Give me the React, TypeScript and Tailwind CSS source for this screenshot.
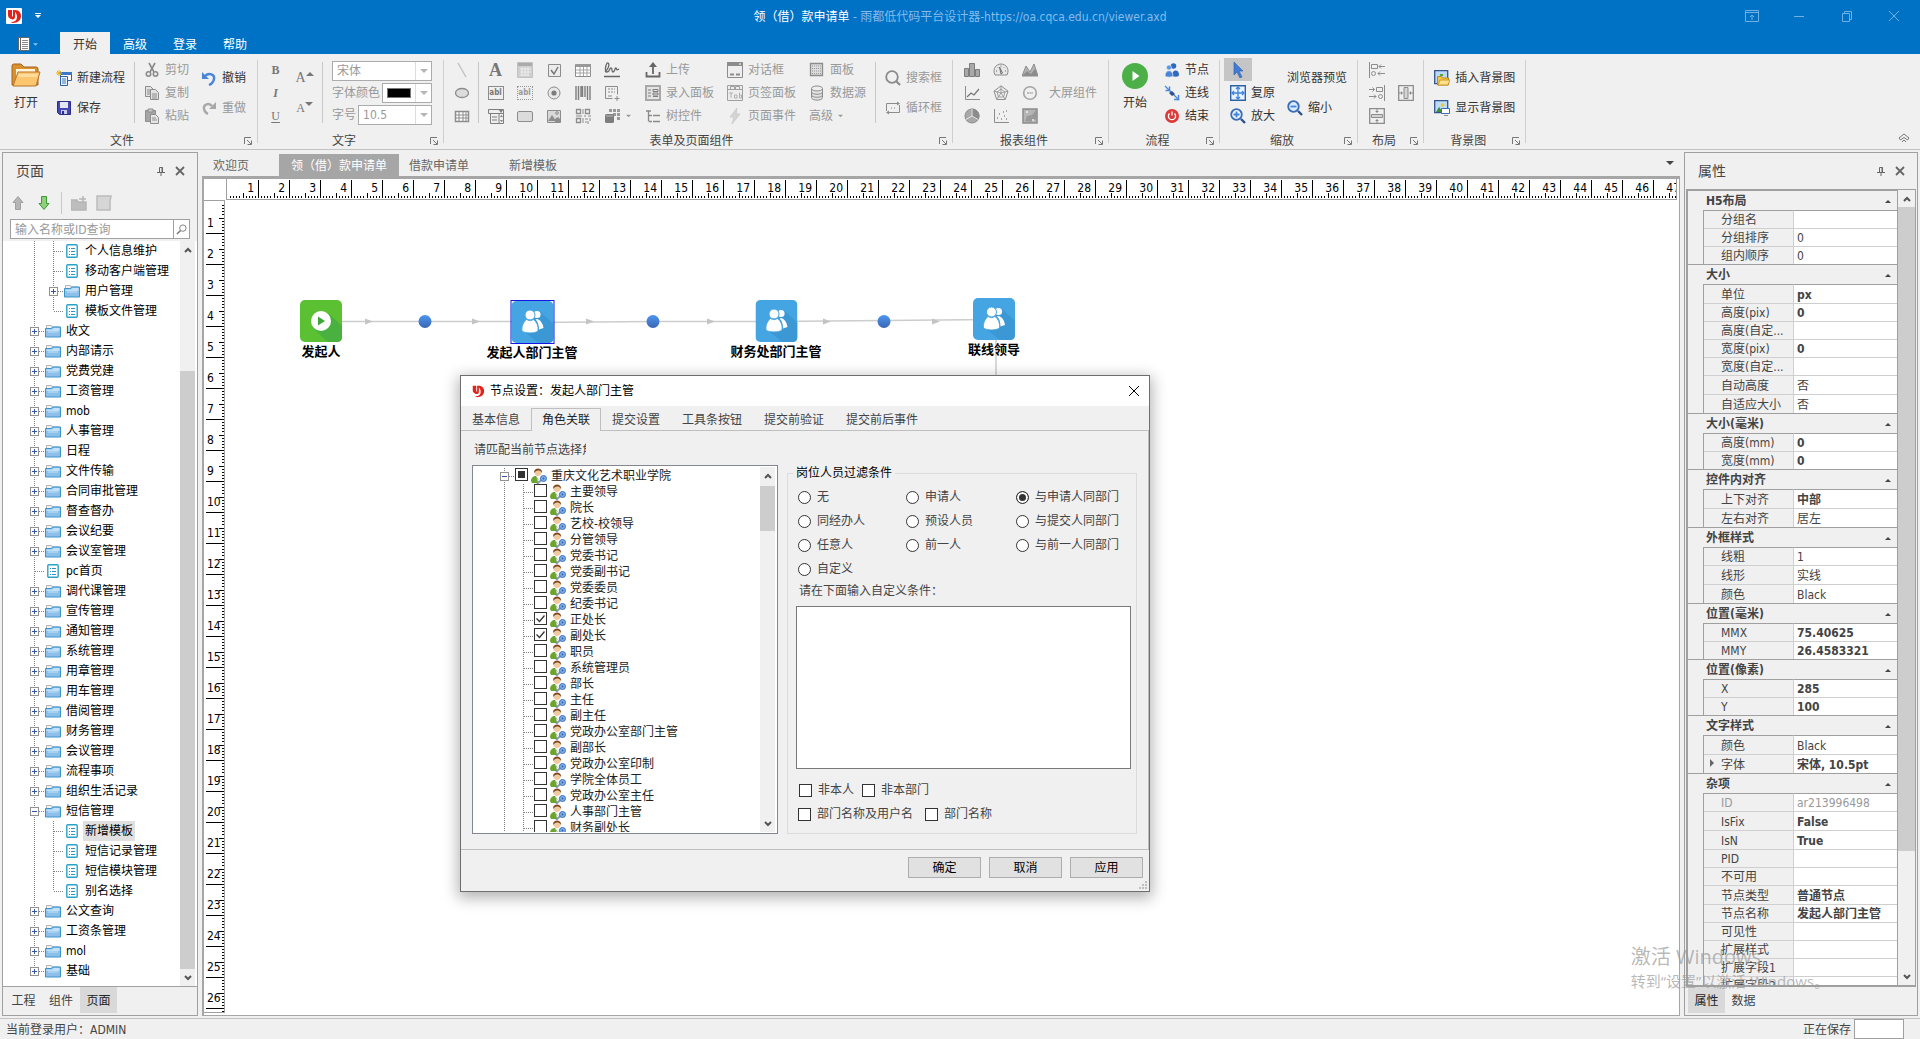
import { useEffect, useRef, useState, type ReactNode } from "react";
import { clsx } from "clsx";

/* ---------- icons ---------- */

function Icon({ children, size = "size-4" }: { children: ReactNode; size?: string }) {
  return (
    <svg viewBox="0 0 16 16" fill="none" stroke="#8c8c8c" className={clsx("shrink-0", size)} aria-hidden="true">
      {children}
    </svg>
  );
}

const icons: Record<string, ReactNode> = {
  newFlow: (
    <>
      <path d="M4.500 2.500h11v8h-11z" fill="#fff" stroke="#2f62a5" />
      <path d="M4 2h12v3H4z" fill="#3d78c4" stroke="none" />
      <path d="M4.500 6.500h7v9h-7z" fill="#eaf2fc" stroke="#2f62a5" />
      <path d="M6 9h4M6 11h4M6 13h4" stroke="#3d78c4" />
      <path d="M3 0v6M0 3h6M1 1l4 4M5 1L1 5" stroke="#e8b21c" />
    </>
  ),
  save: (
    <>
      <path d="M1.500 1.500h13v13h-11l-2-2z" fill="#4646b4" stroke="#2d2d80" />
      <path d="M4 2h8v6H4z" fill="#e4e8f5" stroke="none" />
      <path d="M5 10h6v4H5z" fill="#c8cbe6" stroke="none" />
      <path d="M6 11h2v3H6z" fill="#2d2d80" stroke="none" />
    </>
  ),
  cut: (
    <>
      <path d="M5 1l5 9M11 1L6 10" stroke="#8a8a8a" strokeWidth="1.6" />
      <circle cx="4.500" cy="12" r="2.200" strokeWidth="1.600" />
      <circle cx="11.500" cy="12" r="2.200" strokeWidth="1.600" />
    </>
  ),
  copy: (
    <>
      <path d="M1.500 1.500h5l3 3v7h-8z" fill="#e2e2e2" />
      <path d="M6.500 4.500h5l3 3v7h-8z" fill="#e2e2e2" />
      <path d="M8 9h5M8 11h5M8 13h5M3 5h3M3 7h3M3 9h3" />
    </>
  ),
  paste: (
    <>
      <path d="M1.500 2.500h10v11h-10z" fill="#a5a5a5" />
      <path d="M4 1h5v3H4z" fill="#c9c9c9" />
      <path d="M6.500 6.500h5l3 3v6h-8z" fill="#e6e6e6" />
      <path d="M8 10h4M8 12h5" />
    </>
  ),
  undo: (
    <>
      <path d="M4 6c4-4 10-1.500 9 3-.5 3-2.500 5-5 6" stroke="#4a86d8" strokeWidth="2.400" />
      <path d="M1 2v7h7z" fill="#4a86d8" stroke="none" />
    </>
  ),
  redo: (
    <>
      <path d="M11 6c-3-4-9-1.500-8 3 .5 2.500 2 4 4 5" stroke="#a8a8a8" strokeWidth="2.400" />
      <path d="M15 2v7H8z" fill="#a8a8a8" stroke="none" />
    </>
  ),
  line: <path d="M4 1l8 14" stroke="#c2c2c2" strokeWidth="1.500" />,
  ellipse: <ellipse cx="8" cy="8" rx="6.500" ry="4.500" fill="#dcdcdc" strokeWidth="1.300" />,
  grid: (
    <>
      <path d="M1.500 3.500h13v10h-13z" fill="#fff" strokeWidth="1.500" />
      <path d="M1.500 7h13M1.500 10h13M5 3v10M9 3v10M12 3v10" />
    </>
  ),
  calendar: (
    <>
      <path d="M.5.5h15v15H.5z" fill="#cfcfcf" stroke="#c2c2c2" />
      <path d="M1 1h14v3H1z" fill="#ababab" stroke="none" />
      <path d="M3 7h11M3 10h11M3 13h9M5 5v9M8 5v9M11 5v9" stroke="#ededed" />
    </>
  ),
  check: (
    <>
      <path d="M2.500 2.500h12v12h-12z" fill="#ececec" stroke="#8c8c8c" />
      <path d="M5 8l3 4 4-7" stroke="#777" strokeWidth="1.500" />
    </>
  ),
  table: (
    <>
      <path d="M.5 2.500h15v12H.5z" fill="#fff" />
      <path d="M1 2h15v3H1z" fill="#999" stroke="none" />
      <path d="M1 8h15M1 11h15M5 5v9M8.500 5v9M12 5v9" stroke="#a5a5a5" />
    </>
  ),
  sign: (
    <>
      <path d="M1 10c3-2 5-8 3-9s-4 9-1 9 2-4 4-4 0 4 2 4 2-5 3-4 0 3 3 1" stroke="#666" strokeWidth="1.300" />
      <path d="M0 14.500h16" stroke="#666" strokeWidth="1.500" />
    </>
  ),
  radio: (
    <>
      <circle cx="8" cy="8" r="6" fill="#e8e8e8" />
      <circle cx="8" cy="8" r="2.600" fill="#7c7c7c" stroke="none" />
    </>
  ),
  barcode: <path d="M1 1v14M3.500 1v14M6 1v11M7.500 1v11M10 1v11M12.500 1v14M15 1v14" stroke="#7d7d7d" strokeWidth="1.400" />,
  form: (
    <>
      <path d="M1.500 1.500h12v8M1.500 1.500v12h7" />
      <path d="M4 4h7M4 7h7" strokeDasharray="2 1" />
      <path d="M4 11h4M13 11v5M10.500 13.500h5" />
    </>
  ),
  combo: (
    <>
      <path d="M.5 1.500h15v4H.5zM2.500 5.500h13v10h-13z" fill="#eee" stroke="#7d7d7d" />
      <path d="M4 9h5M4 12h5M11 6v9" stroke="#7d7d7d" />
      <path d="M12 9l1.500-2L15 9zM12 12l1.500 2L15 12zM11 2l4 0-2 3z" fill="#7d7d7d" stroke="none" />
    </>
  ),
  button: <rect x=".5" y="3.500" width="15" height="10" rx="1.500" fill="#dcdcdc" />,
  image: (
    <>
      <path d="M1.500 2.500h13v12h-13z" fill="#d8d8d8" />
      <path d="M2 13l4-6 4 6zM9 11l3-2 3 3v2H9z" fill="#8c8c8c" stroke="none" />
      <circle cx="11" cy="5" r="1.300" />
    </>
  ),
  qr: (
    <>
      <path d="M1.500 1.500h4v4h-4zM10.500 1.500h4v4h-4zM1.500 10.500h4v4h-4z" strokeWidth="1.300" />
      <path d="M8 1v5M1 8h6M9 8h2M13 8h3M8 10v5M10 11h3M13 13v3M10 14h2M15 10v3" />
    </>
  ),
  cubes: (
    <>
      <path d="M5 1h3v3H5zM9 1h3v3H9zM13 1h3v3h-3zM9 5h3v3H9zM13 5h3v3h-3zM13 9h3v3h-3z" fill="#9a9a9a" stroke="none" />
      <rect x="1" y="6" width="9" height="9" rx="1.500" fill="#7d7d7d" stroke="none" />
      <path d="M2 8h7" stroke="#bbb" />
    </>
  ),
  upload: (
    <>
      <path d="M8 12V3M1.500 10v4.500h13V10" stroke="#666" strokeWidth="1.800" />
      <path d="M4 5l4-5 4 5z" fill="#666" stroke="none" />
    </>
  ),
  entry: (
    <>
      <path d="M1 1h14v14H1z" fill="#e4e4e4" strokeWidth="2" stroke="#a8a8a8" />
      <path d="M3 5h3M3 8h3M3 11h3M8 4.500h5v2H8zM8 8h5v2H8zM8 11.500h5" stroke="#7d7d7d" />
    </>
  ),
  tree: (
    <path d="M1 3h5M3.500 3v10.500M4 7.500h3M4 13.500h3M8 7.500h7M8 13.500h7" stroke="#8a8a8a" strokeWidth="1.300" />
  ),
  dialog: (
    <>
      <path d="M.5.5h15v15H.5z" fill="#eee" />
      <path d="M0 0h16v4H0z" fill="#8c8c8c" stroke="none" />
      <path d="M3 12.500h4M9 12.500h4" strokeWidth="2" />
      <path d="M12 2h2" stroke="#fff" />
    </>
  ),
  bolt: <path d="M10 0L3 9h4l-2 7 8-10H9z" fill="#d4d4d4" stroke="#cdcdcd" />,
  tabPage: (
    <>
      <path d="M.5.5h15v15H.5z" fill="#ededed" stroke="#a0a0a0" />
      <path d="M3.500 4.500v-3h4v3M8.500 4.500v-3h4v3M0 4.500h16" stroke="#a0a0a0" />
      <path d="M2 8h4M4 8v5M7.500 10h2.500v3H7.500zM12.500 7.500v5.500h2v-3h-2" stroke="#b0b0b0" />
    </>
  ),
  panel: (
    <>
      <path d="M1.500 1.500h12v12h-12z" fill="#ddd" strokeWidth="1.300" />
      <path d="M3 4h9M3 6.500h9M3 9h9M3 11.500h9" stroke="#999" strokeDasharray="1 1" />
    </>
  ),
  database: (
    <>
      <path d="M2.500 3.500v9c0 3.500 11 3.500 11 0v-9" fill="#e4e4e4" />
      <ellipse cx="8" cy="3.500" rx="5.500" ry="2.500" fill="#eee" />
      <path d="M2.500 7c0 3 11 3 11 0M2.500 10c0 3 11 3 11 0" />
    </>
  ),
  search: (
    <>
      <circle cx="7" cy="7" r="5.800" strokeWidth="1.800" stroke="#8a8a8a" />
      <path d="M11 11l4 4" strokeWidth="2.200" stroke="#8a8a8a" />
    </>
  ),
  loop: (
    <>
      <path d="M1.500 11V3.500h11M14.500 5v7.500h-11" />
      <path d="M12 1.500l3 2-3 2zM4 10.500l-3 2 3 2z" fill="#8c8c8c" stroke="none" />
      <path d="M6 8h1M9 8h1" />
    </>
  ),
  bars: <path d="M.5 6.500h4v8h-4zM5.500 1.500h5v13h-5zM11.500 7.500h4v7h-4z" fill="#a9a9a9" stroke="#7d7d7d" />,
  gauge: (
    <>
      <path d="M2 13C-1 7 3 2 8 2s9 5 6 11z" fill="#e8e8e8" />
      <path d="M8 12L6.500 5 9.500 11zM3 9h1M12 9h1M8 3.500v1M4.500 5l.5.500M11.500 5l-.5.500" stroke="#6f6f6f" />
    </>
  ),
  area: (
    <>
      <path d="M0 14L4 4l4 6 4-8 4 12z" fill="#b3b3b3" stroke="#8c8c8c" />
      <path d="M0 14l5-5 4 3 4-5 3 7z" fill="#8c8c8c" stroke="none" />
    </>
  ),
  lineChart: (
    <>
      <path d="M1.500 1v13.500H16" />
      <path d="M3 12l4-4 3 2 5-6" stroke="#777" strokeWidth="1.300" />
    </>
  ),
  radar: (
    <>
      <path d="M8 .8l7 5.400-2.700 8.300H3.700L1 6.200z" />
      <path d="M8 4l4 3-1.500 5h-5L4 7zM8 1v7M8 8l7-2M8 8l4 6M8 8l-4 6M8 8L1 6" strokeWidth=".8" />
    </>
  ),
  progress: (
    <>
      <circle cx="8" cy="8" r="6.300" strokeWidth="1.600" stroke="#a5a5a5" />
      <path d="M5 8h6" strokeDasharray="2 .6" strokeWidth="2" stroke="#bbb" />
    </>
  ),
  pie: (
    <>
      <circle cx="8" cy="8" r="7" fill="#a8a8a8" />
      <path d="M8 8V1a7 7 0 0 1 6 10.500z" fill="#8c8c8c" />
      <path d="M8 8V1M8 8l6 3.500M8 8l-6 3.500" stroke="#e8e8e8" />
    </>
  ),
  scatter: (
    <>
      <path d="M1.500 1v13.500H16" />
      <path d="M4 10h1M6 6h1M8 11h1M10 4h1M11 8h1M13 11h1M13 3h1" strokeWidth="1.700" />
    </>
  ),
  map: (
    <>
      <path d="M1 1h14v14H1z" fill="#b5b5b5" strokeWidth="1.500" />
      <path d="M3 13l2-5 5-1 4-5v9l-5 3z" fill="#9a9a9a" stroke="none" />
      <path d="M4 4h2M10 12h2" stroke="#eee" strokeWidth="1.500" />
    </>
  ),
  people: (
    <>
      <circle cx="9.500" cy="4" r="2.800" fill="#2f68bd" stroke="none" />
      <path d="M8 14c0-7 7-7 7-1 0 2-4 2-7 1z" fill="#2f68bd" stroke="none" />
      <circle cx="5" cy="5.500" r="2.500" fill="#5b97e5" stroke="#f0f0f0" strokeWidth=".6" />
      <path d="M1 14c0-7 8-7 8 0-1 1.500-7 1.500-8 0z" fill="#4a86d8" stroke="#f0f0f0" strokeWidth=".6" />
    </>
  ),
  link: (
    <>
      <path d="M1 1l14 14" stroke="#4a86d8" strokeWidth="1.300" />
      <path d="M5.500 1.500v4h-4M14.500 10v4.500H10" stroke="#4a86d8" strokeWidth="1.500" />
      <path d="M8 6l3 3-3 2-3-3z" fill="#2f4f8a" stroke="none" />
    </>
  ),
  stop: (
    <>
      <circle cx="8" cy="8" r="7" fill="#dc3a3a" stroke="none" />
      <path d="M8 3.500v4M5.500 5.500a3.600 3.600 0 1 0 5 0" stroke="#fff" strokeWidth="1.300" />
    </>
  ),
  cursor: <path d="M4 0l9 9H9l3 6-2 1-3-6-3 3z" fill="#3f7dd4" stroke="#2c5ca6" strokeWidth=".6" />,
  fit: (
    <>
      <path d="M.7.700h14.600v14.600H.7z" fill="#eaf3ff" stroke="#2f62a5" strokeWidth="1.400" />
      <path d="M8 2v12M2 8h12M6 4l2-2 2 2M6 12l2 2 2-2M4 6L2 8l2 2M12 6l2 2-2 2" stroke="#3f84dd" strokeWidth="1.300" />
    </>
  ),
  zoomIn: (
    <>
      <circle cx="6.500" cy="6.500" r="5.300" fill="#eef5ff" stroke="#3a6db5" strokeWidth="1.800" />
      <path d="M11 11l4 4" stroke="#2d5288" strokeWidth="2.400" />
      <path d="M6.500 3.500v6M3.500 6.500h6" stroke="#3f84dd" strokeWidth="1.800" />
    </>
  ),
  zoomOut: (
    <>
      <circle cx="6.500" cy="6.500" r="5.300" fill="#dceaff" stroke="#3a6db5" strokeWidth="1.800" />
      <path d="M11 11l4 4" stroke="#2d5288" strokeWidth="2.400" />
      <path d="M3.500 6.500h6" stroke="#3f84dd" strokeWidth="1.800" />
    </>
  ),
  alignLeft: (
    <>
      <path d="M.5 0v16M2.500 2.500h6v4h-6zM10 4.500h6M12 2.500l-2 2 2 2M9 11.500h7M11 9.500l-2 2 2 2" />
      <circle cx="4.500" cy="11.500" r="2" />
    </>
  ),
  alignRight: (
    <>
      <path d="M15.500 0v16M7.500 2.500h6v4h-6zM0 4.500h5.500M3.500 2.500l2 2-2 2M0 11.500h7M5 9.500l2 2-2 2" />
      <circle cx="11.500" cy="11.500" r="2" />
    </>
  ),
  centerV: (
    <>
      <path d="M.7.700h14.600v14.600H.7z" strokeWidth="1.300" />
      <path d="M2.500 6.500h11v3h-11z" fill="#d4d4d4" />
      <path d="M8 1v4M6.500 3.500h3M8 15v-4M6.500 12.500h3" />
    </>
  ),
  centerH: (
    <>
      <path d="M.7.700h14.600v14.600H.7z" strokeWidth="1.300" />
      <path d="M6 2.500h4v11H6z" fill="#d4d4d4" />
      <path d="M1 8h4M3.500 6.500v3M15 8h-4M12.500 6.500v3" />
    </>
  ),
  bgInsert: (
    <>
      <path d="M.7.700h13v13H.7z" fill="#bcd8f7" stroke="#33548c" strokeWidth="1.300" />
      <path d="M6 4h3v2H6z" fill="#58a246" stroke="none" />
      <path d="M3.500 6.500h4l1 1.500h6v7h-11z" fill="#f3c64a" stroke="#c28a14" />
      <path d="M4 15l2-5h10l-2 5z" fill="#fde08a" stroke="#c28a14" strokeWidth=".8" />
    </>
  ),
  bgShow: (
    <>
      <path d="M.7.700h13v12H.7z" fill="#bcdcf9" stroke="#33548c" strokeWidth="1.300" />
      <path d="M2 12l3-5 4 5z" fill="#3f8f3a" stroke="none" />
      <circle cx="8.500" cy="5" r="1.800" fill="#f4c62c" stroke="none" />
      <path d="M7.500 8.500h8v5h-8z" fill="#fff" stroke="#3a6db5" />
      <path d="M10 15.500h4" stroke="#8c8c8c" />
    </>
  ),
};

function Logo({ className }: { className: string }) {
  return (
    <svg viewBox="0 0 16 16" className={className} aria-hidden="true">
      <rect width="16" height="16" rx="1" fill="#fff" />
      <path d="M2 2h4v6l1 1V2h2c4 0 6 3 6 6 0 4-3 7-8 7l-3-1c5 0 7-2 7-5 0-2-.7-4-2-5v5c0 2-2 3-4 2S2 9 2 7z" fill="#e0241b" />
    </svg>
  );
}

function Folder() {
  return (
    <svg viewBox="0 0 16 14" className="h-[14px] w-4 shrink-0" aria-hidden="true">
      <path d="M1.500 12V1.500h5l1 1.500h7v9z" fill="#f2f2f2" stroke="#b5b5b5" />
      <path d="M.5 4.500h6l1-1.500h8v10H.5z" fill="#8cc0ea" stroke="#3a94c8" />
      <path d="M1.500 5.500h6l1-1.500h6v3h-13z" fill="#c2e0f8" />
      <path d="M3 8h10" stroke="#bfe0f8" />
    </svg>
  );
}

function Doc() {
  return (
    <svg viewBox="0 0 12 14" className="mx-[2px] h-[14px] w-3 shrink-0" aria-hidden="true">
      <rect x=".8" y=".8" width="10.400" height="12.400" rx="1" fill="#fff" stroke="#2ba2c6" strokeWidth="1.400" />
      <path d="M3 4.500h1M3 7.500h1M3 10.500h1M5 4.500h4M5 7.500h4M5 10.500h4" stroke="#2b95c4" />
    </svg>
  );
}

function RoleIcon() {
  return (
    <svg viewBox="0 0 16 16" className="size-4 shrink-0" aria-hidden="true">
      <path d="M0 13c0-3 2-5 5-5l3 4-1 3H1z" fill="#6ca52e" />
      <path d="M5 8l2 4 3-4 2 2-5 4z" fill="#e6ecf5" />
      <circle cx="7" cy="4.500" r="3.400" fill="#f0c9a0" />
      <path d="M3.200 5C2-1 12-1 11 5c-1-2-2.500-2.500-4-2.500S4.200 3.500 3.200 5z" fill="#7d4a24" />
      <path d="M10.500 12L6 16" stroke="#8b95b8" strokeWidth="1.800" />
      <circle cx="12.500" cy="10.500" r="3" fill="#7fb0ec" stroke="#3c6fb8" />
      <circle cx="12.500" cy="10.500" r=".9" fill="#2f5fa8" />
    </svg>
  );
}

function Triangle({ className }: { className: string }) {
  return (
    <svg viewBox="0 0 8 4" className={clsx("h-1 w-2 shrink-0", className)} aria-hidden="true">
      <path d="M0 0h8L4 4z" fill="currentColor" />
    </svg>
  );
}

function Chevron({ up }: { up?: boolean }) {
  return (
    <svg viewBox="0 0 8 6" className="h-[6px] w-2" fill="none" stroke="#555" strokeWidth="2" aria-hidden="true">
      <path d={up ? "M1 5l3-3 3 3" : "M1 1l3 3 3-3"} />
    </svg>
  );
}

/* ---------- ribbon ---------- */

function Tool({ icon, label, disabled, tall }: { icon?: string; label: string; disabled?: boolean; tall?: boolean }) {
  return (
    <button
      disabled={disabled}
      className={clsx(
        "flex items-center gap-[5px] whitespace-nowrap",
        tall ? "h-[30px]" : "h-[23px]",
        disabled ? "text-[#999]" : "text-[#333]",
      )}
    >
      {icon && <Icon>{icons[icon]}</Icon>}
      {label}
    </button>
  );
}

function Glyph({ icon, label, children }: { icon?: string; label: string; children?: ReactNode }) {
  return (
    <button aria-label={label} className="flex h-[23px] w-[29px] items-center justify-center">
      {icon ? <Icon>{icons[icon]}</Icon> : children}
    </button>
  );
}

function Column({ children, className }: { children: ReactNode; className?: string }) {
  return <div className={clsx("flex flex-col justify-center", className)}>{children}</div>;
}

function Divider({ className }: { className: string }) {
  return <div className={clsx("my-1 w-px bg-[#c8c8c8]", className)} />;
}

function Group({ title, className, children }: { title: string; className: string; children: ReactNode }) {
  return (
    <>
      <section className="flex shrink-0 flex-col pt-1">
        <div className={clsx("flex h-[69px]", className)}>{children}</div>
        <div className="flex flex-1 items-center pt-[6px] pr-[5px] text-[#444]">
          <span className="flex-1 text-center">{title}</span>
          <button aria-label={title + "选项"}>
            <svg viewBox="0 0 8 8" className="size-2" fill="none" stroke="#777" aria-hidden="true">
              <path d="M.5 7V.5H7M3 3l4 4M7.500 3.500v4h-4" />
            </svg>
          </button>
        </div>
      </section>
      <div className="my-1.5 w-px shrink-0 bg-[#cfcfcf]" />
    </>
  );
}

function Combo({ label, value, className }: { label: string; value: string; className: string }) {
  return (
    <span className={clsx("flex h-5 border border-[#ababab] bg-white", className)}>
      <select aria-label={label} className="w-0 flex-1 appearance-none bg-transparent pl-1 text-[#999] outline-none">
        <option>{value}</option>
      </select>
      <span className="flex w-4 items-center justify-center border-l border-[#ddd] text-[#b5b5b5]">
        <Triangle className="" />
      </span>
    </span>
  );
}

function Ribbon() {
  return (
    <div className="flex h-24 shrink-0 border-b border-[#c3c3c3]">
      <Group title="文件" className="pr-[11px]">
        <button className="flex w-[52px] flex-col items-center gap-2 pt-[5px] text-[#333]">
          <svg viewBox="0 0 30 24" className="h-6 w-[30px]" aria-hidden="true">
            <path d="M1 22V3q0-2 2-2h7l3 3h12q2 0 2 2v16z" fill="#d9902f" stroke="#a86520" />
            <path d="M5 6h19v12H5z" fill="#fff3d8" />
            <path d="M2 23L7 9h22l-4 14z" fill="#fbc66d" stroke="#b8742a" />
            <path d="M8 11h19l-1 3H7z" fill="#fddc9c" />
          </svg>
          <span>打开</span>
        </button>
        <Column className="ml-1">
          <Tool tall icon="newFlow" label="新建流程" />
          <Tool tall icon="save" label="保存" />
        </Column>
        <Divider className="mr-[9px] ml-[9px]" />
        <Column>
          <Tool disabled icon="cut" label="剪切" />
          <Tool disabled icon="copy" label="复制" />
          <Tool disabled icon="paste" label="粘贴" />
        </Column>
        <Column className="ml-3">
          <Tool tall icon="undo" label="撤销" />
          <Tool tall disabled icon="redo" label="重做" />
        </Column>
      </Group>

      <Group title="文字" className="pr-[11px] pl-[3px]">
        <Column className="font-['Liberation_Serif'] text-[#777]">
          <Glyph label="粗体"><b>B</b></Glyph>
          <Glyph label="斜体"><b className="italic">I</b></Glyph>
          <Glyph label="下划线"><span className="underline underline-offset-2">U</span></Glyph>
        </Column>
        <Column className="font-['Liberation_Serif'] text-[#777]">
          <button aria-label="增大字号" className="flex h-[30px] w-[29px] items-center justify-center text-sm">
            A<Triangle className="mb-2 w-1 rotate-180" />
          </button>
          <button aria-label="减小字号" className="flex h-[30px] w-[29px] items-center justify-center">
            A<Triangle className="mb-2 w-1" />
          </button>
        </Column>
        <Divider className="mr-[9px] ml-[3px]" />
        <Column className="w-[100px] gap-[2px] text-[#999]">
          <Combo label="字体" value="宋体" className="w-full" />
          <span className="flex items-center justify-between whitespace-nowrap">
            字体颜色
            <button aria-label="字体颜色" className="flex h-5 w-[50px] items-stretch border border-[#ababab] bg-white">
              <span className="m-1 flex-1 border border-[#777] bg-black" />
              <span className="flex w-4 items-center justify-center border-l border-[#ddd] text-[#b5b5b5]">
                <Triangle className="" />
              </span>
            </button>
          </span>
          <span className="flex items-center justify-between whitespace-nowrap">
            字号
            <Combo label="字号" value="10.5" className="w-[74px]" />
          </span>
        </Column>
      </Group>

      <Group title="表单及页面组件" className="pr-[10px] pl-[3px]">
        <Column>
          <Glyph icon="line" label="直线" />
          <Glyph icon="ellipse" label="椭圆" />
          <Glyph icon="grid" label="表格" />
        </Column>
        <Divider className="mx-[2px]" />
        <Column>
          <Glyph label="标签">
            <b className="font-['Liberation_Serif'] text-lg text-[#777]">A</b>
          </Glyph>
          <Glyph label="文本框">
            <span className="h-[14px] w-4 border border-[#8c8c8c] text-center text-[8px] leading-3 font-bold text-[#777]">abl</span>
          </Glyph>
          <Glyph icon="combo" label="下拉框" />
        </Column>
        <Column>
          <Glyph icon="calendar" label="日期" />
          <Glyph label="掩码框">
            <span className="h-[14px] w-4 border border-dotted border-[#999] text-center text-[8px] leading-3 font-bold text-[#999]">abl</span>
          </Glyph>
          <Glyph icon="button" label="按钮" />
        </Column>
        <Column>
          <Glyph icon="check" label="复选框" />
          <Glyph icon="radio" label="单选框" />
          <Glyph icon="image" label="图片" />
        </Column>
        <Column>
          <Glyph icon="table" label="列表" />
          <Glyph icon="barcode" label="条码" />
          <Glyph icon="qr" label="二维码" />
        </Column>
        <Column>
          <Glyph icon="sign" label="签名" />
          <Glyph icon="form" label="子表" />
          <Glyph icon="cubes" label="更多组件" />
        </Column>
        <Column className="w-[19px] justify-end">
          <span className="flex h-[23px] items-center text-[#999]"><Triangle className="w-[5px]" /></span>
        </Column>
        <Column className="w-[69px]">
          <Tool disabled icon="upload" label="上传" />
          <Tool disabled icon="entry" label="录入面板" />
          <Tool disabled icon="tree" label="树控件" />
        </Column>
        <Column className="ml-[13px] w-[69px]">
          <Tool disabled icon="dialog" label="对话框" />
          <Tool disabled icon="tabPage" label="页签面板" />
          <Tool disabled icon="bolt" label="页面事件" />
        </Column>
        <Column className="ml-[13px] w-[57px]">
          <Tool disabled icon="panel" label="面板" />
          <Tool disabled icon="database" label="数据源" />
          <button disabled className="flex h-[23px] items-center gap-[5px] text-[#999]">
            高级 <Triangle className="w-[5px]" />
          </button>
        </Column>
        <Divider className="mr-[9px] ml-[9px]" />
        <Column>
          <Tool tall disabled icon="search" label="搜索框" />
          <Tool tall disabled icon="loop" label="循环框" />
        </Column>
      </Group>

      <Group title="报表组件" className="pr-[11px] pl-1">
        <Column>
          <Glyph icon="bars" label="柱状图" />
          <Glyph icon="lineChart" label="折线图" />
          <Glyph icon="pie" label="饼图" />
        </Column>
        <Column>
          <Glyph icon="gauge" label="仪表盘" />
          <Glyph icon="radar" label="雷达图" />
          <Glyph icon="scatter" label="散点图" />
        </Column>
        <Column>
          <Glyph icon="area" label="面积图" />
          <Glyph icon="progress" label="进度" />
          <Glyph icon="map" label="地图" />
        </Column>
        <Column className="ml-[5px]">
          <Tool disabled label="大屏组件" />
        </Column>
      </Group>

      <Group title="流程" className="pr-[10px] pl-[3px]">
        <button className="flex w-[46px] flex-col items-center gap-[6px] pt-[5px] text-[#333]">
          <svg viewBox="0 0 26 26" className="size-[26px]" aria-hidden="true">
            <circle cx="13" cy="13" r="13" fill="#4caf48" />
            <path d="M10.500 8l7 5-7 5z" fill="#fff" />
          </svg>
          <span>开始</span>
        </button>
        <Column className="ml-[6px]">
          <Tool icon="people" label="节点" />
          <Tool icon="link" label="连线" />
          <Tool icon="stop" label="结束" />
        </Column>
      </Group>

      <Group title="缩放" className="pr-[10px] pl-1">
        <Column>
          <button aria-label="选择" className="flex h-[23px] w-7 items-center justify-center bg-[#c5c5c5]">
            <Icon>{icons.cursor}</Icon>
          </button>
          <div className="pl-[6px]">
            <Tool icon="fit" label="复原" />
            <Tool icon="zoomIn" label="放大" />
          </div>
        </Column>
        <Column className="ml-3">
          <Tool tall label="浏览器预览" />
          <Tool tall icon="zoomOut" label="缩小" />
        </Column>
      </Group>

      <Group title="布局" className="pr-[3px] pl-1">
        <Column>
          <Glyph icon="alignLeft" label="左对齐" />
          <Glyph icon="alignRight" label="右对齐" />
          <Glyph icon="centerV" label="垂直居中" />
        </Column>
        <Column>
          <Glyph icon="centerH" label="水平居中" />
        </Column>
      </Group>

      <Group title="背景图" className="px-[10px]">
        <Column>
          <Tool tall icon="bgInsert" label="插入背景图" />
          <Tool tall icon="bgShow" label="显示背景图" />
        </Column>
      </Group>

      <button aria-label="折叠功能区" className="mt-auto mr-[10px] mb-[6px] ml-auto">
        <svg viewBox="0 0 12 10" className="h-[10px] w-3" fill="none" stroke="#777" aria-hidden="true">
          <path d="M1 5l5-4 5 4-1.500 2L6 4.500 2.500 7zM4 9l2-2 2 2" />
        </svg>
      </button>
    </div>
  );
}

/* ---------- shared panel parts ---------- */

function ScrollBar({ width, before, thumb, after }: { width: string; before: string; thumb: string; after: string }) {
  return (
    <div className={clsx("flex shrink-0 flex-col bg-[#f0f0f0]", width)}>
      <button aria-label="向上滚动" className="flex h-[17px] items-center justify-center"><Chevron up /></button>
      <div className={before} />
      <div className={clsx("bg-[#cdcdcd]", thumb)} />
      <div className={after} />
      <button aria-label="向下滚动" className="flex h-[17px] items-center justify-center"><Chevron /></button>
    </div>
  );
}

function PanelHeader({ title }: { title: string }) {
  return (
    <header className="flex h-9 shrink-0 items-center pr-3 pl-[13px]">
      <h2 className="flex-1 text-sm text-[#444]">{title}</h2>
      <button aria-label="固定" className="mr-[10px]">
        <svg viewBox="0 0 8 10" className="h-[10px] w-2" fill="none" stroke="#666" aria-hidden="true">
          <path d="M2.500 1.500h3v5M2.500 1.500v5M5 1.500v5M0 6.500h8M4 7v3" />
        </svg>
      </button>
      <button aria-label="关闭">
        <svg viewBox="0 0 10 10" className="size-[10px]" stroke="#666" strokeWidth="1.800" aria-hidden="true">
          <path d="M1 1l8 8M9 1L1 9" />
        </svg>
      </button>
    </header>
  );
}

/* one 19px wide column of the tree's dotted guide lines */
function Branch({ toggle, last, arm = true }: { toggle?: "+" | "-"; last?: boolean; arm?: boolean }) {
  return (
    <span className="relative flex h-full w-[19px] shrink-0 items-center justify-center">
      <svg className="absolute inset-0 size-full" stroke="#808080" strokeDasharray="1 1" shapeRendering="crispEdges" aria-hidden="true">
        <line x1="9.5" y1="0" x2="9.5" y2={last ? "50%" : "100%"} />
        {arm && <line x1="10" y1="50%" x2="19" y2="50%" />}
      </svg>
      {toggle && (
        <button aria-label={toggle === "+" ? "展开" : "折叠"} className="relative size-[9px]">
          <svg viewBox="0 0 9 9" className="size-[9px]" shapeRendering="crispEdges" aria-hidden="true">
            <path d="M.5.5h8v8h-8z" fill="#fff" stroke="#919191" />
            <path d={toggle === "+" ? "M2 4.500h5M4.500 2v5" : "M2 4.500h5"} stroke="#3355a5" />
          </svg>
        </button>
      )}
    </span>
  );
}

/* ---------- left: page tree ---------- */

type PageNode = { name: string; level: 1 | 2; kind: "folder" | "page"; open?: boolean; last?: boolean; selected?: boolean };

const folder = (name: string): PageNode => ({ name, level: 1, kind: "folder" });

const pages: PageNode[] = [
  { name: "个人信息维护", level: 2, kind: "page" },
  { name: "移动客户端管理", level: 2, kind: "page" },
  { name: "用户管理", level: 2, kind: "folder" },
  { name: "模板文件管理", level: 2, kind: "page", last: true },
  ...["收文", "内部请示", "党费党建", "工资管理", "mob", "人事管理", "日程", "文件传输", "合同审批管理", "督查督办", "会议纪要", "会议室管理"].map(folder),
  { name: "pc首页", level: 1, kind: "page" },
  ...["调代课管理", "宣传管理", "通知管理", "系统管理", "用章管理", "用车管理", "借阅管理", "财务管理", "会议管理", "流程事项", "组织生活记录"].map(folder),
  { name: "短信管理", level: 1, kind: "folder", open: true },
  { name: "新增模板", level: 2, kind: "page", selected: true },
  { name: "短信记录管理", level: 2, kind: "page" },
  { name: "短信模块管理", level: 2, kind: "page" },
  { name: "别名选择", level: 2, kind: "page", last: true },
  ...["公文查询", "工资条管理", "mol"].map(folder),
  { name: "基础", level: 1, kind: "folder", last: true },
];

function PagesPanel() {
  return (
    <aside className="flex w-[196px] shrink-0 flex-col border border-[#a0a0a0]">
      <PanelHeader title="页面" />
      <div className="flex h-7 shrink-0 items-center pl-[7px]">
        <button aria-label="上移" className="mr-[10px]">
          <svg viewBox="0 0 16 16" className="size-4" aria-hidden="true">
            <path d="M8 1.500l5 6h-2.500v7h-5v-7H3z" fill="#b5b5b5" stroke="#a0a0a0" />
          </svg>
        </button>
        <button aria-label="下移">
          <svg viewBox="0 0 16 16" className="size-4" aria-hidden="true">
            <path d="M8 14.500l5-6h-2.500v-7h-5v7H3z" fill="#8ed07c" stroke="#3f9a35" />
          </svg>
        </button>
        <span className="mx-[9px] h-[22px] w-px bg-[#c8c8c8]" />
        <button aria-label="新建目录" className="mr-[9px]">
          <svg viewBox="0 0 16 16" className="size-4" aria-hidden="true">
            <path d="M0 5h6l1 2h8v8H0zM8 4h7M12 1v6" fill="#bdbdbd" stroke="#b5b5b5" strokeWidth="1.500" />
          </svg>
        </button>
        <button aria-label="新建页面">
          <svg viewBox="0 0 16 16" className="size-4" aria-hidden="true">
            <path d="M1 1h14l-1 5v9H1z" fill="#d6d6d6" stroke="#bcbcbc" strokeWidth="1.500" />
          </svg>
        </button>
      </div>
      <div className="mx-[7px] my-[2px] flex h-5 shrink-0 border border-[#a0a0a0] bg-white">
        <input aria-label="搜索页面" placeholder="输入名称或ID查询" className="w-0 flex-1 px-1 pt-px outline-none placeholder:text-[#999]" />
        <button aria-label="查询" className="flex w-4 items-center justify-center border-l border-[#a0a0a0]">
          <svg viewBox="0 0 12 12" className="size-[11px]" fill="none" stroke="#777" aria-hidden="true">
            <circle cx="7.500" cy="4.500" r="3.500" />
            <path d="M5 7l-4 4" strokeWidth="1.600" />
          </svg>
        </button>
      </div>
      <div className="flex min-h-0 flex-1 border-b border-[#a0a0a0] bg-white pr-[2px]">
        <ul className="min-w-0 flex-1 overflow-hidden pl-[22px] text-black">
          {pages.map((p) => (
            <li key={p.name} className="flex h-5 items-center whitespace-nowrap">
              {p.level === 2 && <Branch arm={false} />}
              <Branch toggle={p.kind === "folder" ? (p.open ? "-" : "+") : undefined} last={p.last} />
              <span className="ml-px">{p.kind === "folder" ? <Folder /> : <Doc />}</span>
              <span className={clsx("ml-[3px] px-[2px] leading-5", p.selected && "bg-[#e0e0e0]")}>{p.name}</span>
            </li>
          ))}
        </ul>
        <ScrollBar width="w-[15px]" before="grow-[113]" thumb="grow-[598]" after="" />
      </div>
      <div className="flex h-7 shrink-0 pl-[2px] text-[#444]">
        <button className="h-[26px] w-[37px] pt-[2px]">工程</button>
        <button className="h-[26px] w-[38px] pt-[2px]">组件</button>
        <button className="h-[26px] w-[37px] bg-[#d9d9d9] pt-[2px] text-[#222]">页面</button>
      </div>
    </aside>
  );
}

/* ---------- centre: rulers and flow canvas ---------- */

const CM = 31;

/* length of the ruler, in pixels, along the given axis */
function useLength(axis: "clientWidth" | "clientHeight") {
  const ref = useRef<HTMLDivElement>(null);
  const [length, setLength] = useState(0);

  useEffect(() => {
    const el = ref.current;
    if (!el) return;
    const observer = new ResizeObserver(() => setLength(el[axis]));
    observer.observe(el);
    setLength(el[axis]);
    return () => observer.disconnect();
  }, [axis]);

  return { ref, length };
}

const ticks = (length: number, draw: (pos: number, size: number) => string) =>
  Array.from({ length: Math.floor((length * 10) / CM) }, (_, i) => {
    const n = i + 1;
    const size = n % 10 === 0 ? 18 : n % 5 === 0 ? 5 : 2;
    return draw(Math.round((n * CM) / 10), size);
  }).join("");

function HorizontalRuler() {
  const { ref, length } = useLength("clientWidth");
  return (
    <div ref={ref} className="mr-[2px] overflow-hidden border-r border-b border-l border-[#a0a0a0]">
      <svg className="block size-full" shapeRendering="crispEdges">
        <path d={ticks(length, (x, s) => `M${x + 0.5} ${19 - s}v${s}`)} stroke="#000" />
        {Array.from({ length: Math.ceil((length - 14) / CM) }, (_, i) => (
          <text key={i} x={(i + 1) * CM - 4} y="13" textAnchor="end" className="fill-black text-xs">{i + 1}</text>
        ))}
      </svg>
    </div>
  );
}

function VerticalRuler() {
  const { ref, length } = useLength("clientHeight");
  return (
    <div ref={ref} className="mr-px mb-[2px] overflow-hidden border-t border-r border-b border-[#a0a0a0]">
      <svg className="block size-full" shapeRendering="crispEdges">
        <path d={ticks(length, (y, s) => `M${20 - s} ${y + 1.5}h${s}`)} stroke="#000" />
        {Array.from({ length: Math.floor(length / CM) }, (_, i) => (
          <text key={i} x="3" y={(i + 1) * CM - 5} className="fill-black text-xs">{i + 1}</text>
        ))}
      </svg>
    </div>
  );
}

const flowNodes = [
  { name: "发起人", x: 95, y: 100, start: true },
  { name: "发起人部门主管", x: 306, y: 101, selected: true },
  { name: "财务处部门主管", x: 550, y: 100 },
  { name: "联线领导", x: 768, y: 98 },
];

function NodeImage({ start }: { start?: boolean }) {
  return (
    <svg viewBox="0 0 42 42" className="size-full" aria-hidden="true">
      <rect width="42" height="42" rx="5" fill={start ? "#5cc132" : "#45a4e2"} />
      {start ? (
        <>
          <path d="M28 13l14 13v11q0 5-5 5H28L13 28z" fill="#48b13f" />
          <circle cx="21" cy="21" r="10" fill="#fff" />
          <path d="M18 16.500l7 4.500-7 4.500z" fill="#3fa53a" />
        </>
      ) : (
        <>
          <path d="M29 11l13 12v14q0 5-5 5H27L12 30z" fill="#3c97d5" />
          <circle cx="25.500" cy="13.500" r="3.600" fill="#fff" />
          <path d="M25.500 18c4 1 6 5 6.500 9l-4.500 1.500c0-4-1-8-3.500-10z" fill="#fff" />
          <circle cx="18.500" cy="14" r="5" fill="#fff" stroke="#45a4e2" />
          <path d="M10.500 30c-.5-6 2-9 4.500-11.500 2 1.500 5 1.500 7 0 3.500 2.500 5 7 4.500 11.500-3 2.500-13 2.500-16 0z" fill="#fff" stroke="#45a4e2" strokeWidth=".8" />
        </>
      )}
    </svg>
  );
}

function FlowCanvas() {
  return (
    <div className="relative overflow-hidden">
      <svg className="absolute inset-0 size-full" aria-hidden="true">
        <defs>
          <linearGradient id="dot" x1="0" y1="0" x2="0" y2="1">
            <stop offset="0" stopColor="#4c96f0" />
            <stop offset="1" stopColor="#3a66b4" />
          </linearGradient>
        </defs>
        <path d="M116 121.500H306M306 122.500L427 121.500H550M550 121.500L658 120.500L768 119.500M770 140V400" stroke="#cdcdcd" strokeWidth="1.500" fill="none" />
        {[142, 249, 363, 484, 600, 709].map((x) => (
          <path key={x} d={`M${x - 3} 118.500l8 3-8 3z`} fill="#c4c4c4" />
        ))}
        {[199, 427, 658].map((x) => (
          <circle key={x} cx={x} cy="121.500" r="6.500" fill="url(#dot)" />
        ))}
      </svg>
      {flowNodes.map((n) => (
        <button key={n.name} className="absolute flex -translate-x-1/2 flex-col items-center gap-[2px]" style={{ left: n.x, top: n.y }}>
          <span className={clsx("size-[42px]", n.selected && "outline outline-[#1414e6]")}>
            <NodeImage start={n.start} />
          </span>
          <span className="text-[13px] leading-4 font-bold whitespace-nowrap text-black">{n.name}</span>
        </button>
      ))}
    </div>
  );
}

function Workspace() {
  return (
    <main className="flex min-w-0 flex-1 flex-col">
      <div className="flex h-6 shrink-0 items-stretch pt-[2px] text-[#666]">
        <button className="w-[77px] pt-[2px] pl-[11px] text-left">欢迎页</button>
        <button className="w-[120px] bg-[#a6a6a6] pt-[2px] text-white">领（借）款申请单</button>
        <button className="w-[100px] pt-[2px] pl-[10px] text-left">借款申请单</button>
        <button className="w-[100px] pt-[2px] pl-[10px] text-left">新增模板</button>
        <button aria-label="页签列表" className="mr-[6px] ml-auto pb-1 text-[#444]"><Triangle className="" /></button>
      </div>
      <div className="grid min-h-0 flex-1 grid-cols-[22px_minmax(0,1fr)] grid-rows-[21px_minmax(0,1fr)] border-t-[3px] border-r border-b border-l-2 border-[#a6a6a6] bg-white">
        <div />
        <HorizontalRuler />
        <VerticalRuler />
        <FlowCanvas />
      </div>
    </main>
  );
}

/* ---------- right: property grid ---------- */

type Prop = { name: string; value?: string; bold?: boolean; tall?: boolean; muted?: boolean; expand?: boolean };

const categories: { title: string; props: Prop[] }[] = [
  { title: "H5布局", props: [{ name: "分组名" }, { name: "分组排序", value: "0" }, { name: "组内顺序", value: "0" }] },
  {
    title: "大小",
    props: [
      { name: "单位", value: "px", bold: true, tall: true },
      { name: "高度(pix)", value: "0", bold: true },
      { name: "高度(自定..." },
      { name: "宽度(pix)", value: "0", bold: true },
      { name: "宽度(自定..." },
      { name: "自动高度", value: "否", tall: true },
      { name: "自适应大小", value: "否", tall: true },
    ],
  },
  { title: "大小(毫米)", props: [{ name: "高度(mm)", value: "0", bold: true }, { name: "宽度(mm)", value: "0", bold: true }] },
  {
    title: "控件内对齐",
    props: [{ name: "上下对齐", value: "中部", bold: true, tall: true }, { name: "左右对齐", value: "居左", tall: true }],
  },
  {
    title: "外框样式",
    props: [{ name: "线粗", value: "1" }, { name: "线形", value: "实线", tall: true }, { name: "颜色", value: "Black", tall: true }],
  },
  { title: "位置(毫米)", props: [{ name: "MMX", value: "75.40625", bold: true }, { name: "MMY", value: "26.4583321", bold: true }] },
  { title: "位置(像素)", props: [{ name: "X", value: "285", bold: true }, { name: "Y", value: "100", bold: true }] },
  {
    title: "文字样式",
    props: [{ name: "颜色", value: "Black", tall: true }, { name: "字体", value: "宋体, 10.5pt", bold: true, tall: true, expand: true }],
  },
  {
    title: "杂项",
    props: [
      { name: "ID", value: "ar213996498", muted: true },
      { name: "IsFix", value: "False", bold: true, tall: true },
      { name: "IsN", value: "True", bold: true, tall: true },
      { name: "PID" },
      { name: "不可用" },
      { name: "节点类型", value: "普通节点", bold: true, tall: true },
      { name: "节点名称", value: "发起人部门主管", bold: true },
      { name: "可见性" },
      { name: "扩展样式" },
      { name: "扩展字段1" },
      { name: "扩展字段2" },
    ],
  },
];

function PropertiesPanel() {
  return (
    <aside className="flex w-[234px] shrink-0 flex-col border border-[#a0a0a0]">
      <PanelHeader title="属性" />
      <div className="mx-px flex min-h-0 flex-1 border-t border-r border-b-2 border-l-2 border-[#a0a0a0]">
        <div className="min-w-0 flex-1 overflow-hidden">
          <table className="w-full table-fixed border-separate border-spacing-0 leading-4 text-[#444]">
            <colgroup>
              <col className="w-4" />
              <col className="w-[89px]" />
              <col />
            </colgroup>
            {categories.map((c) => (
              <tbody key={c.title}>
                <tr>
                  <th className="h-5 border-t border-[#a0a0a0] p-0" />
                  <th colSpan={2} scope="colgroup" className="h-5 border-t border-[#a0a0a0] p-0 pl-[2px] text-left font-bold">
                    <span className="flex items-center justify-between pt-px pr-[6px]">
                      {c.title}
                      <Triangle className="h-[3px] w-[6px] rotate-180" />
                    </span>
                  </th>
                </tr>
                {c.props.map((p, i) => {
                  const line = i === 0 ? "border-t-[#a0a0a0]" : "border-t-[#cfcfcf]";
                  const height = p.tall ? "h-[19px]" : "h-[18px]";
                  return (
                    <tr key={p.name} className={p.muted ? "text-[#999]" : ""}>
                      <td className="border-r border-[#a0a0a0] p-0" />
                      <th scope="row" className={clsx("relative truncate border-t p-0 pt-px pl-[17px] text-left font-normal", line, height)}>
                        {p.expand && (
                          <svg viewBox="0 0 4 8" className="absolute top-1 left-[6px] h-2 w-1" aria-hidden="true">
                            <path d="M0 0v8l4-4z" fill="#666" />
                          </svg>
                        )}
                        {p.name}
                      </th>
                      <td className={clsx("truncate border-t border-l border-l-[#cfcfcf] bg-white p-0 pt-px pl-[3px]", line, height, p.bold && "font-bold")}>
                        {p.value}
                      </td>
                    </tr>
                  );
                })}
              </tbody>
            ))}
          </table>
        </div>
        <ScrollBar width="w-[18px] border-l border-[#a0a0a0]" before="" thumb="grow-[646]" after="grow-[117]" />
      </div>
      <div className="flex h-7 shrink-0 pl-[3px] text-[#444]">
        <button className="h-[26px] w-[37px] bg-[#d9d9d9] pt-[2px] text-[#222]">属性</button>
        <button className="h-[26px] w-[37px] pt-[2px]">数据</button>
      </div>
    </aside>
  );
}

/* ---------- node settings dialog ---------- */

const dialogTabs = ["基本信息", "角色关联", "提交设置", "工具条按钮", "提交前验证", "提交前后事件"];

const roles = [
  "主要领导", "院长", "艺校-校领导", "分管领导", "党委书记", "党委副书记", "党委委员", "纪委书记", "正处长", "副处长", "职员",
  "系统管理员", "部长", "主任", "副主任", "党政办公室部门主管", "副部长", "党政办公室印制", "学院全体员工", "党政办公室主任",
  "人事部门主管", "财务副处长",
];

const filters = ["无", "申请人", "与申请人同部门", "同经办人", "预设人员", "与提交人同部门", "任意人", "前一人", "与前一人同部门", "自定义"];

function Check({ label, checked, onChange, partial }: { label: string; checked: boolean; onChange: () => void; partial?: boolean }) {
  return (
    <span className="relative size-[13px] shrink-0">
      <input
        type="checkbox"
        aria-label={label}
        checked={checked}
        onChange={onChange}
        className="block size-[13px] appearance-none border border-[#333] bg-white"
      />
      {partial && <span className="pointer-events-none absolute inset-[3px] bg-[#333]" />}
      {checked && !partial && (
        <svg viewBox="0 0 13 13" className="pointer-events-none absolute inset-0" fill="none" stroke="#333" strokeWidth="1.300" aria-hidden="true">
          <path d="M2.500 6.500l3 3 5-6" />
        </svg>
      )}
    </span>
  );
}

function NodeDialog() {
  const [tab, setTab] = useState("角色关联");
  const [picked, setPicked] = useState<string[]>(["正处长", "副处长"]);
  const [filter, setFilter] = useState("与申请人同部门");
  const [options, setOptions] = useState<string[]>([]);

  const flip = (list: string[], name: string) => (list.includes(name) ? list.filter((n) => n !== name) : [...list, name]);

  const option = (name: string) => (
    <label className="flex items-center gap-[6px]">
      <Check label={name} checked={options.includes(name)} onChange={() => setOptions(flip(options, name))} />
      {name}
    </label>
  );

  return (
    <div
      role="dialog"
      aria-label="节点设置"
      className="absolute top-[375px] left-[460px] flex w-[690px] flex-col border border-[#6e6e6e] bg-[#f0f0f0] text-[#444] shadow-[0_4px_14px_2px_rgba(0,0,0,0.3)]"
    >
      <header className="flex h-[30px] items-center bg-white pr-[9px] pl-[10px] text-black">
        <Logo className="mr-[5px] size-[14px]" />
        <span className="flex-1">节点设置：发起人部门主管</span>
        <button aria-label="关闭">
          <svg viewBox="0 0 12 12" className="size-3" stroke="#000" aria-hidden="true">
            <path d="M1 1l10 10M11 1L1 11" />
          </svg>
        </button>
      </header>
      <div role="tablist" className="flex h-[25px] items-end border-b border-[#bfbfbf]">
        {dialogTabs.map((t) => (
          <button
            key={t}
            role="tab"
            aria-selected={t === tab}
            onClick={() => setTab(t)}
            className={clsx(
              t === tab ? "-mb-px h-[23px] border border-b-0 border-[#bfbfbf] bg-[#f0f0f0] px-[10px] text-[#222]" : "h-[21px] px-[11px]",
            )}
          >
            {t}
          </button>
        ))}
      </div>

      <div className="flex gap-[9px] border-r border-b border-[#bfbfbf] pt-[10px] pr-[11px] pb-[15px] pl-[11px]">
        <div className="w-[306px] shrink-0">
          <p className="mb-[6px] ml-[2px] w-[112px] overflow-hidden leading-[18px] whitespace-nowrap">请匹配当前节点选择角色</p>
          <div className="flex h-[369px] border border-[#828790] bg-white p-px pr-[2px]">
            <ul className="h-full min-w-0 flex-1 overflow-hidden pt-px pl-[21px] text-[#222]">
              <li className="flex h-4 items-center">
                <Branch toggle="-" />
                <span className="mr-[3px] ml-px self-start">
                  <Check label="重庆文化艺术职业学院" partial checked onChange={() => setPicked([])} />
                </span>
                <RoleIcon />
                <span className="ml-1">重庆文化艺术职业学院</span>
              </li>
              {roles.map((r) => (
                <li key={r} className="flex h-4 items-center">
                  <Branch arm={false} />
                  <Branch />
                  <span className="mr-[3px] ml-px self-start">
                    <Check label={r} checked={picked.includes(r)} onChange={() => setPicked(flip(picked, r))} />
                  </span>
                  <RoleIcon />
                  <span className="ml-1">{r}</span>
                </li>
              ))}
            </ul>
            <ScrollBar width="w-[15px]" before="grow-[2]" thumb="grow-[45]" after="grow-[284]" />
          </div>
        </div>

        <fieldset className="mt-6 flex-1 border border-[#dcdcdc]">
          <legend className="ml-[5px] px-[3px] leading-4 text-black">岗位人员过滤条件</legend>
          <div className="grid grid-cols-[108px_110px_1fr] pt-1 pl-[10px]">
            {filters.map((f) => (
              <label key={f} className="flex h-6 items-center gap-[6px]">
                <input
                  type="radio"
                  name="filter"
                  checked={filter === f}
                  onChange={() => setFilter(f)}
                  className="size-[13px] shrink-0 appearance-none rounded-full border border-[#333] bg-white checked:bg-[#333] checked:shadow-[inset_0_0_0_2px_#fff]"
                />
                {f}
              </label>
            ))}
          </div>
          <label htmlFor="condition" className="block pl-[11px] leading-5">请在下面输入自定义条件：</label>
          <textarea id="condition" className="mt-[5px] mr-[5px] ml-2 block h-[163px] w-[calc(100%-13px)] resize-none border border-[#7a7a7a] bg-white" />
          <div className="mt-[9px] flex h-6 items-center gap-2 pl-[11px]">
            {option("非本人")}
            {option("非本部门")}
          </div>
          <div className="mb-[6px] flex h-6 items-center gap-3 pl-[10px]">
            {option("部门名称及用户名")}
            {option("部门名称")}
          </div>
        </fieldset>
      </div>

      <footer className="relative flex justify-end gap-2 pt-[7px] pr-[6px] pb-[13px] text-black">
        {["确定", "取消", "应用"].map((b) => (
          <button key={b} className="h-[21px] w-[73px] border border-[#adadad] bg-[#e1e1e1]">{b}</button>
        ))}
        <svg viewBox="0 0 8 8" className="absolute right-[2px] bottom-[2px] size-2" fill="#bfbfbf" aria-hidden="true">
          <path d="M6 0h2v2H6zM3 3h2v2H3zM6 3h2v2H6zM0 6h2v2H0zM3 6h2v2H3zM6 6h2v2H6z" />
        </svg>
      </footer>
    </div>
  );
}

/* ---------- window ---------- */

function TitleBar() {
  return (
    <div className="shrink-0 bg-[#0072c6] text-white">
      <div className="flex h-8 items-center">
        <div className="flex w-48 items-center pl-[6px]">
          <Logo className="size-4" />
          <button aria-label="自定义快速访问工具栏" className="ml-[13px]">
            <svg viewBox="0 0 6 6" className="size-[6px]" fill="#fff" aria-hidden="true">
              <path d="M0 0h6v1H0zM0 2h6L3 5z" />
            </svg>
          </button>
        </div>
        <h1 className="flex-1 pt-[2px] text-center">
          领（借）款申请单 <span className="text-[#86bbea]">- 雨都低代码平台设计器-https://oa.cqca.edu.cn/viewer.axd</span>
        </h1>
        <div className="flex w-48 pr-[2px]">
          {[
            ["功能区选项", "M.5.5h13v11H.5zM.5 2.500h13M7 10V5M5 7l2-2 2 2"],
            ["最小化", "M2 6.500h10"],
            ["还原", "M2.500 3.500h7v8h-7zM4.500 3V1.500h7v8H10"],
            ["关闭", "M2 1l10 10M12 1L2 11"],
          ].map(([label, d]) => (
            <button key={label} aria-label={label} className="flex h-8 flex-1 items-center justify-center">
              <svg viewBox="0 0 14 12" className="h-3 w-[14px]" fill="none" stroke="#6fb1e3" aria-hidden="true">
                <path d={d} />
              </svg>
            </button>
          ))}
        </div>
      </div>
      <nav className="flex h-[22px]">
        <button aria-label="文件菜单" className="flex w-[60px] items-center gap-[3px] pt-[2px] pl-[18px]">
          <svg viewBox="0 0 12 14" className="h-[14px] w-3" aria-hidden="true">
            <path d="M.5.5h11v13H.5z" fill="#fff" stroke="#666" />
            <path d="M2.500 1v12" stroke="#666" />
            <path d="M4 3.500h6M4 5.500h6M4 7.500h6M4 9.500h6M4 11.500h6" stroke="#888" />
          </svg>
          <Triangle className="h-[3px] w-[5px] text-[#8fbfe8]" />
        </button>
        <button className="w-[50px] bg-[#f0f0f0] pt-[3px] text-[#333]">开始</button>
        <button className="w-[50px] pt-[3px]">高级</button>
        <button className="w-[50px] pt-[3px]">登录</button>
        <button className="w-[50px] pt-[3px]">帮助</button>
      </nav>
    </div>
  );
}

export default function App() {
  return (
    <div className="relative flex h-screen flex-col overflow-hidden bg-[#f0f0f0] font-['DejaVu_Sans_Condensed','Noto_Sans_CJK_SC',sans-serif] text-xs">
      <TitleBar />
      <Ribbon />
      <div className="flex min-h-0 flex-1 gap-1 p-[2px]">
        <PagesPanel />
        <Workspace />
        <PropertiesPanel />
      </div>
      <footer className="flex h-[21px] shrink-0 items-center border-t border-[#c3c3c3] pr-4 pl-[6px] text-[#444]">
        <span className="flex-1 pt-px">当前登录用户：ADMIN</span>
        <span className="mr-[3px] pt-px">正在保存</span>
        <progress aria-label="保存进度" value={0} max={100} className="h-5 w-[50px] appearance-none border border-[#a0a0a0] bg-white [&::-webkit-progress-bar]:bg-white" />
      </footer>

      <NodeDialog />

      <div className="pointer-events-none absolute right-[91px] bottom-12 font-['Open_Sans','Noto_Sans_CJK_SC',sans-serif] whitespace-nowrap text-[#9a9a9a]/70">
        <p className="text-xl leading-7">激活 Windows</p>
        <p className="text-[15px] leading-5">转到“设置”以激活 Windows。</p>
      </div>
    </div>
  );
}
